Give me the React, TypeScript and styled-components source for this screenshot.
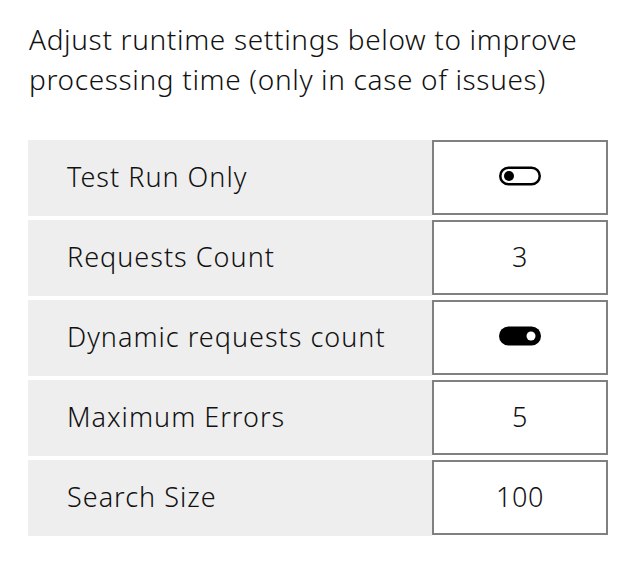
import React, { useState } from 'react';
import styled, { createGlobalStyle } from 'styled-components';

type Setting =
  | { id: string; label: string; kind: 'toggle'; value: boolean }
  | { id: string; label: string; kind: 'number'; value: number };

const initialSettings: Setting[] = [
  { id: 'testRun', label: 'Test Run Only', kind: 'toggle', value: false },
  { id: 'requests', label: 'Requests Count', kind: 'number', value: 3 },
  { id: 'dynamic', label: 'Dynamic requests count', kind: 'toggle', value: true },
  { id: 'maxErrors', label: 'Maximum Errors', kind: 'number', value: 5 },
  { id: 'searchSize', label: 'Search Size', kind: 'number', value: 100 },
];

function ToggleIcon({ on }: { on: boolean }) {
  if (on) {
    return (
      <svg width="44" height="22" viewBox="0 0 44 22" aria-hidden="true">
        <rect x="1" y="1.5" width="42" height="19" rx="9.5" fill="#000" />
        <circle cx="33" cy="11" r="4.5" fill="#fff" />
      </svg>
    );
  }
  return (
    <svg width="44" height="22" viewBox="0 0 44 22" aria-hidden="true">
      <rect x="2.25" y="2.75" width="39.5" height="16.5" rx="8.25" fill="none" stroke="#000" strokeWidth="2.5" />
      <circle cx="11" cy="11" r="5" fill="#000" />
    </svg>
  );
}

function App() {
  const [settings, setSettings] = useState<Setting[]>(initialSettings);

  const handleToggle = (id: string) => {
    setSettings((prev) =>
      prev.map((s) => (s.id === id && s.kind === 'toggle' ? { ...s, value: !s.value } : s))
    );
  };

  return (
    <Page>
      <GlobalStyle />
      <Intro>Adjust runtime settings below to improve processing time (only in case of issues)</Intro>
      <SettingsGrid>
        {settings.map((s) => (
          <Row key={s.id}>
            <Label>{s.label}</Label>
            <ValueBox>
              {s.kind === 'toggle' ? (
                <ToggleButton type="button" onClick={() => handleToggle(s.id)}>
                  <ToggleIcon on={s.value} />
                </ToggleButton>
              ) : (
                <span>{s.value}</span>
              )}
            </ValueBox>
          </Row>
        ))}
      </SettingsGrid>
    </Page>
  );
}

const GlobalStyle = createGlobalStyle`
  body {
    margin: 0;
    background: #fff;
    font-family: "Noto Sans", "Open Sans", sans-serif;
    font-weight: 350;
    color: #111;
  }
`;

const Page = styled.div`
  padding: 19px 26px 0 28px;
  width: 634px;
  box-sizing: border-box;
`;

const Intro = styled.p`
  margin: 0 0 41px 1px;
  font-size: 28px;
  line-height: 40px;
  letter-spacing: 0.65px;
  color: #111;
`;

const SettingsGrid = styled.div`
  display: grid;
  row-gap: 4px;
`;

const Row = styled.div`
  display: grid;
  grid-template-columns: 404px 176px;
  height: 76px;
`;

const Label = styled.div`
  display: flex;
  align-items: center;
  background: #eeeeee;
  padding: 0 0 3px 39px;
  font-size: 27px;
  letter-spacing: 1px;
`;

const ValueBox = styled.div`
  display: flex;
  align-items: center;
  justify-content: center;
  box-sizing: border-box;
  height: 75px;
  padding-bottom: 3px;
  border: 2px solid #808080;
  background: #fff;
  font-size: 27px;
  letter-spacing: 0.5px;
`;

const ToggleButton = styled.button`
  display: flex;
  padding: 0;
  border: none;
  background: none;
  cursor: pointer;
`;

export default App;
